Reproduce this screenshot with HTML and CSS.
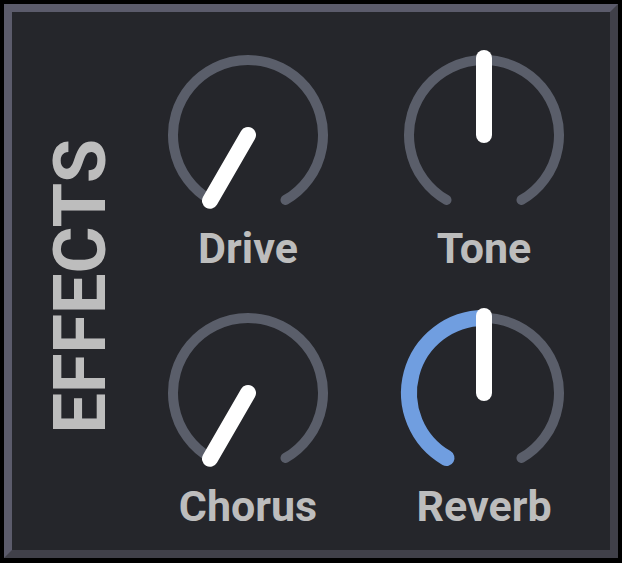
FILE: index.html
```html
<!DOCTYPE html>
<html lang="en">
<head>
    <meta charset="UTF-8">
    <meta name="viewport" content="width=device-width, initial-scale=1.0">
    <title>Effects</title>
    <link rel="stylesheet" href="styles.css">
</head>
<body>

    <div class="panel">
        <div class="side">
            <div class="side-title">EFFECTS</div>
        </div>

        <div class="knobs">
            <div class="knob">
                <svg class="dial" viewBox="0 0 170 170" width="170" height="170">
                    <path class="track" d="M 47.5 149.95 A 75 75 0 1 1 122.5 149.95" />
                    <line class="pointer" x1="85" y1="85" x2="47" y2="150.8" />
                </svg>
                <div class="label">Drive</div>
            </div>

            <div class="knob">
                <svg class="dial" viewBox="0 0 170 170" width="170" height="170">
                    <path class="track" d="M 47.5 149.95 A 75 75 0 1 1 122.5 149.95" />
                    <line class="pointer" x1="85" y1="85" x2="85" y2="8" />
                </svg>
                <div class="label">Tone</div>
            </div>

            <div class="knob">
                <svg class="dial" viewBox="0 0 170 170" width="170" height="170">
                    <path class="track" d="M 47.5 149.95 A 75 75 0 1 1 122.5 149.95" />
                    <line class="pointer" x1="85" y1="85" x2="47" y2="150.8" />
                </svg>
                <div class="label">Chorus</div>
            </div>

            <div class="knob">
                <svg class="dial" viewBox="0 0 170 170" width="170" height="170">
                    <path class="track" d="M 47.5 149.95 A 75 75 0 1 1 122.5 149.95" />
                    <!-- заполненная часть -->
                    <path class="value" d="M 47.5 149.95 A 75 75 0 0 1 85 10" />
                    <line class="pointer" x1="85" y1="85" x2="85" y2="8" />
                </svg>
                <div class="label">Reverb</div>
            </div>
        </div>
    </div>

</body>
</html>
```

FILE: styles.css
```css
body {
    margin: 0;
    padding: 4px;
    background-color: #000;
    font-family: Roboto, "Liberation Sans", sans-serif;
}

.panel {
    box-sizing: border-box;
    width: 614px;
    height: 554px;
    background-color: #25262b;
    border: 8px solid;
    border-color: #5b5b6b #404049 #404049 #5b5b6b;
    display: flex;
}

.side {
    box-sizing: border-box;
    width: 118px;
    display: flex;
    align-items: center;
    justify-content: center;
    padding-top: 10px;
    padding-left: 19px;
}

.side-title {
    writing-mode: vertical-rl;
    transform: rotate(180deg);
    font-size: 72px;
    font-weight: 700;
    color: #bdbdbd;
    line-height: 1;
}

.knobs {
    display: grid;
    grid-template-columns: repeat(2, 236px);
    row-gap: 38px;
    padding-top: 38px;
    align-content: start;
}

.knob {
    display: flex;
    flex-direction: column;
    align-items: center;
}

.dial {
    display: block;
    overflow: visible;
}

.track {
    fill: none;
    stroke: #5a5e6a;
    stroke-width: 10;
    stroke-linecap: round;
}

.value {
    fill: none;
    stroke: #709ee0;
    stroke-width: 16;
    stroke-linecap: round;
}

.pointer {
    stroke: #fff;
    stroke-width: 16;
    stroke-linecap: round;
}

.label {
    margin-top: 7px;
    font-size: 43px;
    font-weight: 700;
    line-height: 1;
    color: #bdbdbd;
}
```
